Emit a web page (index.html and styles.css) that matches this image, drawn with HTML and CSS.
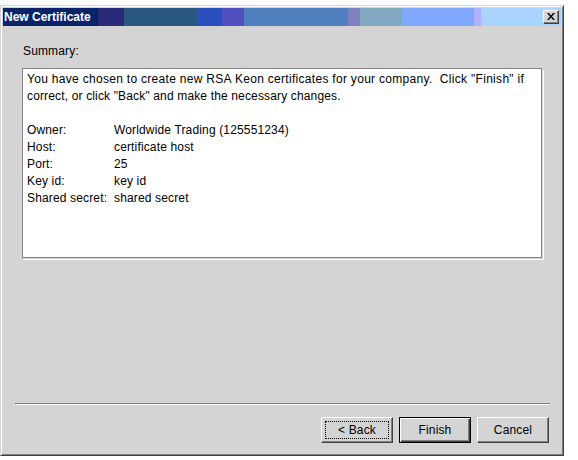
FILE: index.html
```html
<!DOCTYPE html>
<html>
<head>
<meta charset="utf-8">
<title>New Certificate</title>
<link rel="stylesheet" href="styles.css">
</head>
<body>
<div class="window">
  <div class="titlebar">
    <span class="title">New Certificate</span>
    <button class="close" aria-label="Close">
      <svg width="8" height="7" viewBox="0 0 8 7"><path d="M0 0h2l2 2.5 2-2.5h2l-3 3.5 3 3.5h-2l-2-2.5-2 2.5h-2l3-3.5z" fill="#000"/></svg>
    </button>
  </div>
  <div class="content">
    <div class="summary">Summary:</div>
    <div class="box">
      <p class="intro"><span class="wide">You have chosen to create new RSA Keon certificates for your company.&nbsp; Click "Finish" if</span><br>correct, or click "Back" and make the necessary changes.</p>
      <div class="details">
        <span>Owner:</span><span>Worldwide Trading (125551234)</span>
        <span>Host:</span><span>certificate host</span>
        <span>Port:</span><span>25</span>
        <span>Key id:</span><span>key id</span>
        <span>Shared secret:</span><span>shared secret</span>
      </div>
    </div>
    <div class="spacer"></div>
    <div class="sep"></div>
    <div class="buttons">
      <button class="btn focus">&lt; Back</button>
      <button class="btn default">Finish</button>
      <button class="btn">Cancel</button>
    </div>
  </div>
</div>
</body>
</html>
```
FILE: styles.css
```css
html, body {
  margin: 0;
  padding: 0;
  background: #ffffff;
}

body {
  font-family: "Liberation Sans", Arial, sans-serif;
  font-size: 12px;
  color: #000;
}

.window {
  margin-top: 5px;
  width: 564px;
  height: 451px;
  box-sizing: border-box;
  background: #d4d4d4;
  border: 1px solid;
  border-color: #d4d4d4 #404040 #404040 #d4d4d4;
  box-shadow: inset 1px 1px 0 #ffffff, inset -1px -1px 0 #808080;
  padding: 2px;
  display: flex;
  flex-direction: column;
}

.titlebar {
  height: 18px;
  display: flex;
  align-items: center;
  justify-content: space-between;
  padding: 0 2px 0 1px;
  background: linear-gradient(to right,
    #0a246a 0px, #0a246a 95px,
    #2b2a7a 95px, #2b2a7a 121px,
    #2a5880 121px, #2a5880 194px,
    #2a50c0 194px, #2a50c0 219px,
    #5050c0 219px, #5050c0 241px,
    #5080c0 241px, #5080c0 345px,
    #8080c0 345px, #8080c0 357px,
    #80a8c0 357px, #80a8c0 399px,
    #80a8ff 399px, #80a8ff 471px,
    #b0b0ff 471px, #b0b0ff 478px,
    #a8d4ff 478px, #a8d4ff 100%);
}

.title {
  color: #ffffff;
  font-weight: bold;
  font-size: 12px;
  line-height: 18px;
}

.close {
  width: 16px;
  height: 14px;
  padding: 0;
  margin: 0;
  box-sizing: border-box;
  background: #d4d4d4;
  border: 1px solid;
  border-color: #ffffff #404040 #404040 #ffffff;
  box-shadow: inset -1px -1px 0 #808080;
  display: flex;
  align-items: center;
  justify-content: center;
}

.close svg {
  display: block;
  margin: 0 1px 1px 0;
}

.content {
  flex: 1;
  display: flex;
  flex-direction: column;
  padding-top: 18px;
}

.summary {
  margin-left: 20px;
  line-height: 15px;
  letter-spacing: 0.15px;
}

.box {
  margin: 9px 0 0 19px;
  width: 520px;
  height: 190px;
  box-sizing: border-box;
  background: #ffffff;
  border: 1px solid #858585;
  box-shadow: 1px 1px 0 #d4d4d4, 2px 2px 0 #ffffff;
  padding: 2px 4px;
  line-height: 17px;
  letter-spacing: 0.15px;
}

.intro {
  margin: 0 0 17px 0;
  white-space: nowrap;
}

.wide {
  letter-spacing: 0.3px;
}

.details {
  display: grid;
  grid-template-columns: 87px auto;
}

.spacer {
  flex: 1;
}

.sep {
  margin: 0 11px 0 12px;
  height: 0;
  border-top: 1px solid #808080;
  border-bottom: 1px solid #ffffff;
}

.buttons {
  display: flex;
  justify-content: flex-end;
  gap: 6px;
  margin: 12px 12px 10px 0;
}

.btn {
  width: 72px;
  height: 26px;
  box-sizing: border-box;
  font-family: "Liberation Sans", Arial, sans-serif;
  font-size: 12px;
  letter-spacing: 0.15px;
  color: #000;
  background: #d4d4d4;
  border: 1px solid;
  border-color: #ffffff #404040 #404040 #ffffff;
  box-shadow: inset -1px -1px 0 #808080;
  padding: 0;
}

.btn.default {
  border: 1px solid #000000;
  box-shadow: inset 1px 1px 0 #ffffff, inset -1px -1px 0 #404040, inset -2px -2px 0 #808080;
}

.btn.focus {
  outline: 1px dotted #000000;
  outline-offset: -5px;
}
```
